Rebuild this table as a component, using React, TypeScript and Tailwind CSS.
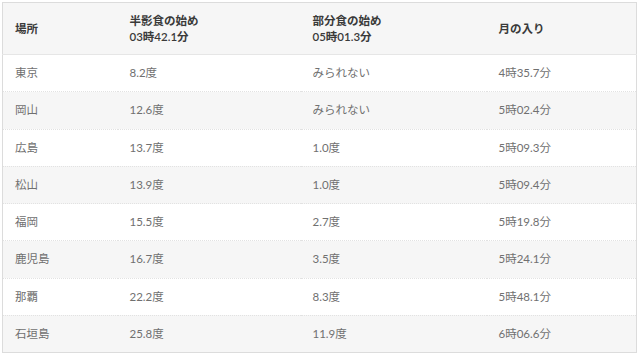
const rows = [
  ["東京", "8.2度", "みられない", "4時35.7分"],
  ["岡山", "12.6度", "みられない", "5時02.4分"],
  ["広島", "13.7度", "1.0度", "5時09.3分"],
  ["松山", "13.9度", "1.0度", "5時09.4分"],
  ["福岡", "15.5度", "2.7度", "5時19.8分"],
  ["鹿児島", "16.7度", "3.5度", "5時24.1分"],
  ["那覇", "22.2度", "8.3度", "5時48.1分"],
  ["石垣島", "25.8度", "11.9度", "6時06.6分"],
];

export default function App() {
  return (
    <div
      className="w-[640px] h-[356px] bg-white pt-[2px] pl-[2px]"
      style={{ fontFamily: 'Lato, "Noto Sans CJK JP", sans-serif' }}
    >
      <table className="w-[635px] border border-[#dcdcdc] border-collapse text-[11.5px] leading-[16px] table-fixed">
        <colgroup>
          <col className="w-[115px]" />
          <col className="w-[183px]" />
          <col className="w-[186px]" />
          <col />
        </colgroup>
        <thead>
          <tr className="h-[52px] bg-[#f6f6f6] border-b border-[#e6e6e6] text-left text-[#3a3a3a]">
            <th className="pl-3 font-semibold">場所</th>
            <th className="pl-3 font-semibold">
              半影食の始め
              <br />
              03時42.1分
            </th>
            <th className="pl-3 font-semibold">
              部分食の始め
              <br />
              05時01.3分
            </th>
            <th className="pl-3 font-semibold">月の入り</th>
          </tr>
        </thead>
        <tbody>
          {rows.map((r, i) => (
            <tr
              key={r[0]}
              className={`h-[37.25px] border-b border-dotted border-[#e2e2e2] text-[#707070] ${
                i % 2 === 0 ? "bg-white" : "bg-[#f6f6f6]"
              }`}
            >
              {r.map((c, j) => (
                <td key={j} className="pl-3">
                  {c}
                </td>
              ))}
            </tr>
          ))}
        </tbody>
      </table>
    </div>
  );
}
